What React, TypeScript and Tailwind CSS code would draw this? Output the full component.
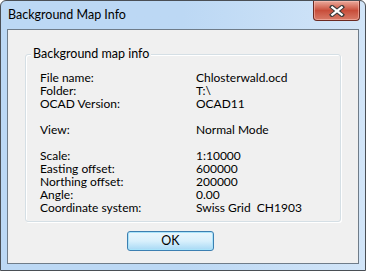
import React from "react";

const rows: [string, string][] = [
  ["File name:", "Chlosterwald.ocd"],
  ["Folder:", "T:\\"],
  ["OCAD Version:", "OCAD11"],
  ["", ""],
  ["View:", "Normal Mode"],
  ["", ""],
  ["Scale:", "1:10000"],
  ["Easting offset:", "600000"],
  ["Northing offset:", "200000"],
  ["Angle:", "0.00"],
  ["Coordinate system:", "Swiss Grid  CH1903"],
];

function CloseButton() {
  return (
    <div className="mr-[5px] flex h-[20px] w-[47px] items-center justify-center rounded-b-[4px] border border-t-0 border-[#6b2a22] bg-gradient-to-b from-[#e9a99c] via-[#c84d3a] to-[#d87a68] shadow-[inset_0_0_0_1px_rgba(255,200,190,0.5)]">
      <svg width="16" height="12" viewBox="0 0 16 12">
        <path d="M3 2 L13 10 M13 2 L3 10" stroke="#3a3a3a" strokeWidth="4.2" strokeLinecap="square" />
        <path d="M3.3 2.3 L12.7 9.7 M12.7 2.3 L3.3 9.7" stroke="#ffffff" strokeWidth="2.2" strokeLinecap="square" />
      </svg>
    </div>
  );
}

export default function App() {
  return (
    <div
      className="h-[271px] w-[366px] bg-white"
      style={{ fontFamily: "Lato, 'Noto Sans', sans-serif" }}
    >
      <div className="flex h-full w-full flex-col rounded-t-[6px] border border-[#4a4f55] bg-gradient-to-r from-[#bcd8f4] via-[#bcd8f4] to-[#d2e5f8]">
        {/* title bar */}
        <div className="flex h-[28px] shrink-0 items-start justify-between">
          <span className="ml-[7px] mt-[6px] text-[12.5px] leading-[16px] text-black">
            Background Map Info
          </span>
          <CloseButton />
        </div>

        {/* client area */}
        <div className="mx-[6px] mb-[6px] flex flex-1 flex-col border border-[#6f7c89] bg-[#f0f0f0]">
          <div className="relative ml-[17px] mt-[24px] h-[168px] w-[316px] rounded-[3px] border border-[#d5dfe5] shadow-[inset_1px_1px_0_#ffffff,1px_1px_0_#ffffff]">
            <span className="absolute -top-[8px] left-[5px] bg-[#f0f0f0] px-[2px] text-[12.5px] leading-[14px] text-black">
              Background map info
            </span>
            <div className="ml-[14px] mt-[16px] flex flex-col text-[12px] leading-[13px] text-black">
              {rows.map(([label, value], i) => (
                <div key={i} className="flex h-[13px]">
                  <span className="w-[156px] shrink-0">{label}</span>
                  <span className="whitespace-pre">{value}</span>
                </div>
              ))}
            </div>
          </div>

          <div className="ml-[119px] mt-[9px] flex h-[20px] w-[87px] items-center justify-center rounded-[3px] border border-[#3c7fb1] bg-gradient-to-b from-[#eaf6fd] via-[#d9f0fc] to-[#a7d9f5] text-[12.5px] text-black shadow-[inset_0_0_0_1px_#a9e3fa]">
            OK
          </div>
        </div>
      </div>
    </div>
  );
}
